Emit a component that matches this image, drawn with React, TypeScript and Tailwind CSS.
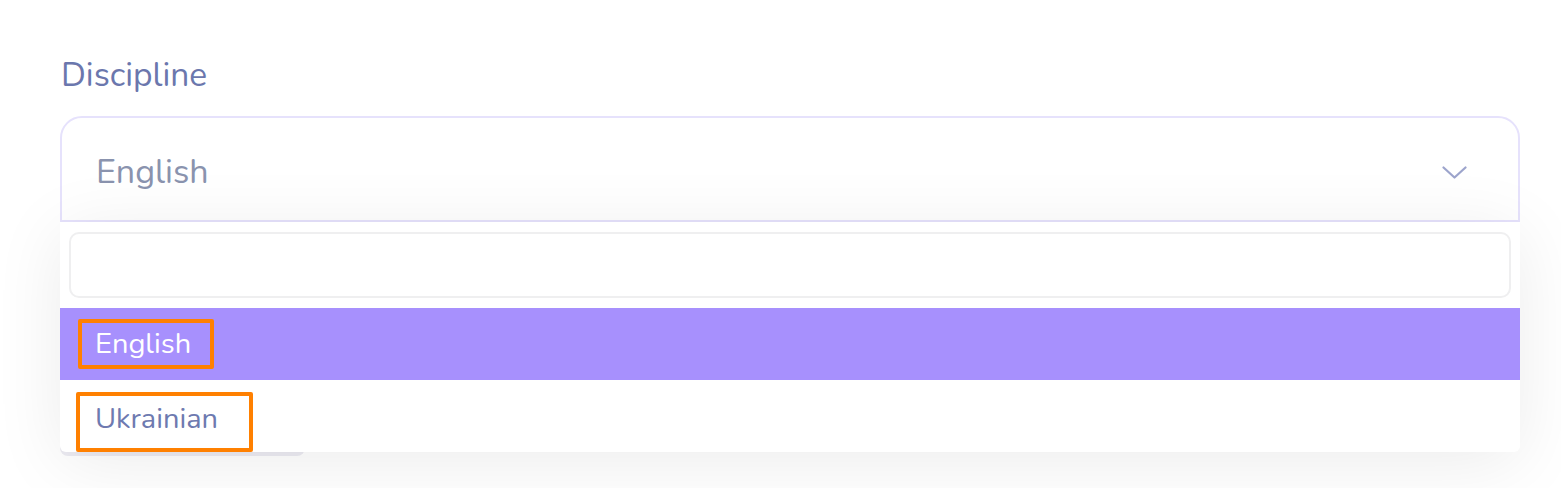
const font = { fontFamily: "Nunito, Lato, 'Noto Sans', sans-serif" };

const options = ["English", "Ukrainian"];

const Chevron = () => (
  <svg width="25" height="13" viewBox="0 0 25 13" fill="none" className="mt-[6px] text-[#9ca4cc]">
    <polyline points="1.5,1.5 12.5,11.5 23.5,1.5" stroke="currentColor" strokeWidth="2.2" strokeLinecap="round" strokeLinejoin="round" />
  </svg>
);

const App = () => {
  return (
    <div className="min-h-[488px] w-[1561px] bg-white pl-[60px] pt-[55px]" style={font}>
      <label className="block text-[33.5px] leading-[40px] text-[#6b77ad] pl-[1px]">Discipline</label>
      <div className="relative mt-[21px] w-[1460px]">
        <div className="flex h-[106px] items-center justify-between rounded-t-[22px] border-2 border-[#e6e2fc] pl-[34px] pr-[51px]">
          <span className="pt-[6px] text-[34px] text-[#8a93ae]">English</span>
          <Chevron />
        </div>

        {/* element behind the menu, only its bottom edge shows */}
        <div className="mt-[224px] h-[10px] w-[245px] rounded-b-[8px] bg-[#ecebf2]" />

        <div className="absolute left-0 top-[106px] z-10 w-full rounded-b-[6px] bg-white pt-[10px] shadow-[0_10px_70px_rgba(0,0,0,0.08)]">
          <div className="mx-[9px] h-[66px] rounded-[10px] border-2 border-[#efeff0]" />
          <div className="mt-[10px]">
            {options.map((o, i) => (
              <div
                key={o}
                className={
                  i === 0
                    ? "flex h-[72px] items-center bg-[#a790fd] pl-[18px] text-white"
                    : "flex h-[72px] items-end pl-[16px] text-[#6e7ab0]"
                }
              >
                <span
                  className={
                    i === 0
                      ? "flex h-[50px] w-[136px] items-center rounded-[2px] border-4 border-[#ff8000] pl-[13px] text-[29px]"
                      : "flex h-[60px] w-[177px] items-center rounded-[2px] border-4 border-[#ff8000] pl-[15px] pb-[6px] text-[29px]"
                  }
                >
                  {o}
                </span>
              </div>
            ))}
          </div>
        </div>
      </div>
    </div>
  );
};

export default App;
